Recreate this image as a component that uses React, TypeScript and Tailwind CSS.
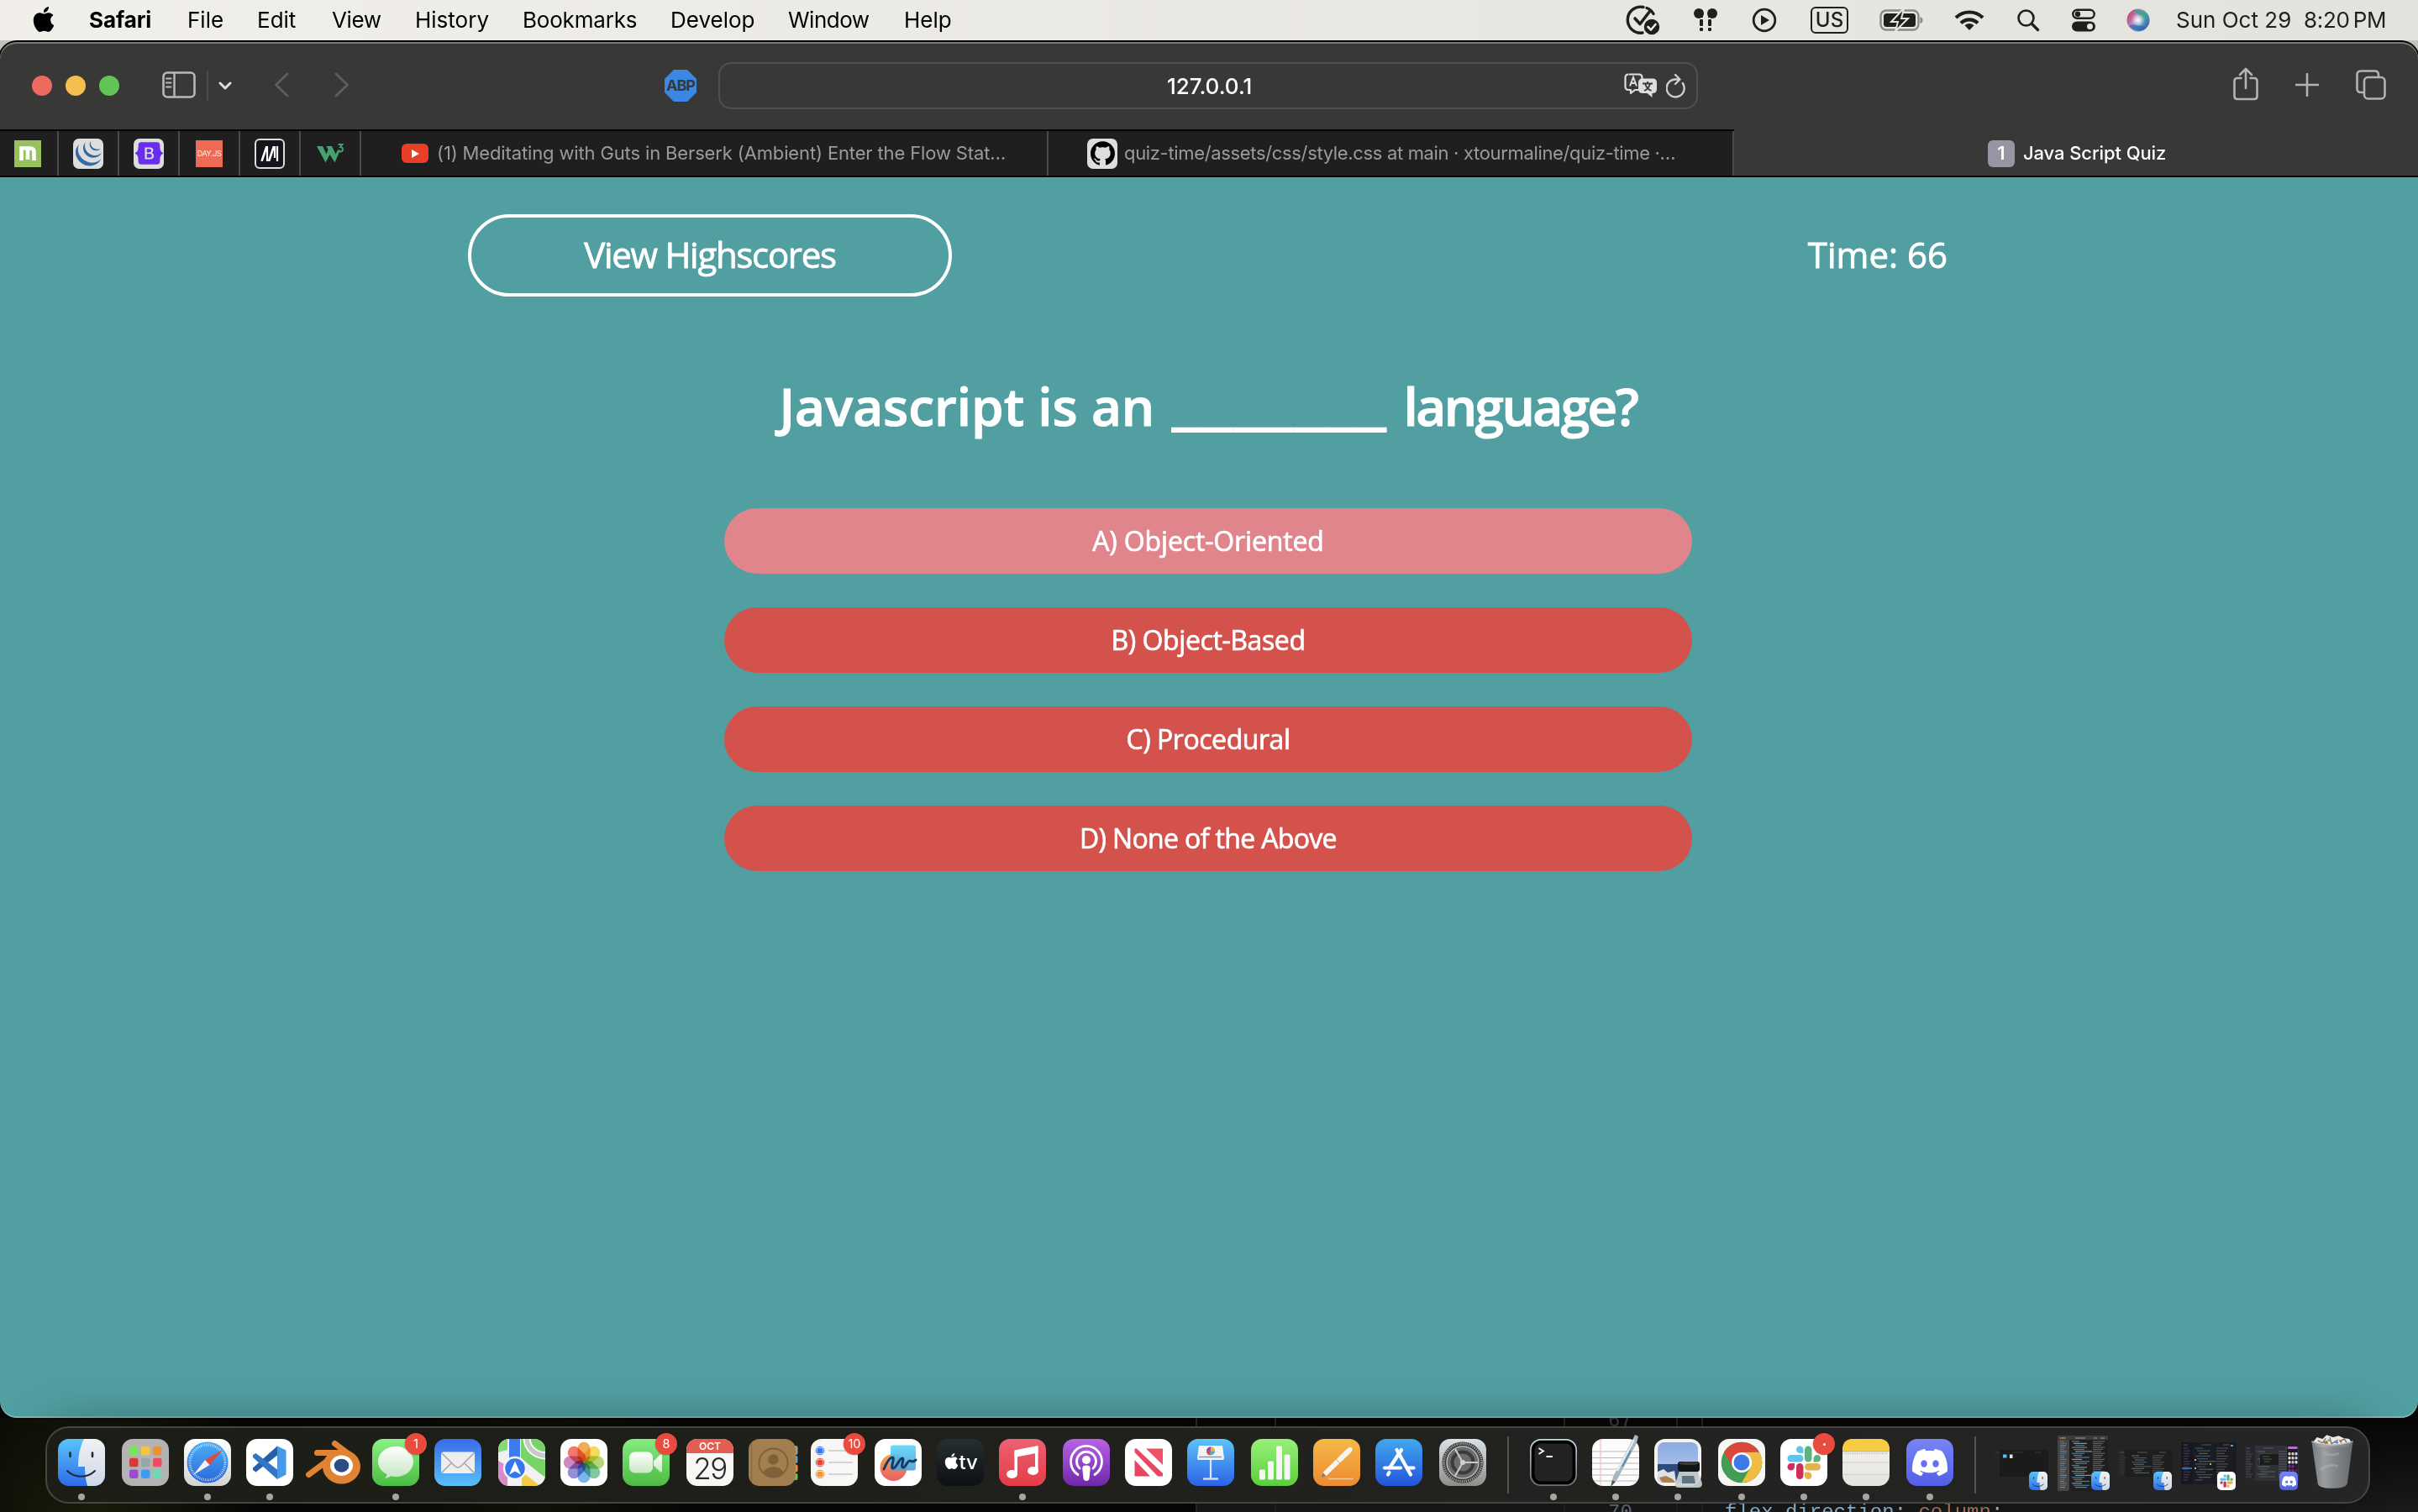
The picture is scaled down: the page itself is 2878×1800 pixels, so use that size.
import type { ReactNode } from "react";
import { SiApple, SiGithub, SiJquery, SiDiscord, SiBootstrap } from "react-icons/si";

/* ---------- Menu bar ---------- */

const MENUS = [
  { label: "Safari", cls: "w-[117px] font-bold tracking-[-0.1px]" },
  { label: "File", cls: "w-[83px]" },
  { label: "Edit", cls: "w-[89px]" },
  { label: "View", cls: "w-[99px] tracking-[-0.4px]" },
  { label: "History", cls: "w-[128px]" },
  { label: "Bookmarks", cls: "w-[176px] tracking-[-0.2px]" },
  { label: "Develop", cls: "w-[140px]" },
  { label: "Window", cls: "w-[138px] tracking-[-0.5px]" },
  { label: "Help", cls: "w-[60px]" },
];

function MenuBar() {
  return (
    <header className="flex h-12 shrink-0 items-center bg-gradient-to-r from-[#f1efe9] to-[#e4e2dc] text-[26px] leading-[47px] text-black">
      <SiApple size={30} className="-mt-[3px] mr-[39px] ml-[37px]" />
      {MENUS.map((m) => (
        <span key={m.label} className={"-mt-px whitespace-nowrap " + m.cls}>{m.label}</span>
      ))}
      <div className="ml-auto flex items-center text-[#1f1f1e]">
        <svg width="42" height="38" viewBox="0 0 42 38" className="mr-[38px]" fill="none" stroke="currentColor" strokeLinecap="round" strokeLinejoin="round">
          <path d="M21 3.5A15.500 15.500 0 1 0 20 34" strokeWidth="3.4" />
          <path d="M25 4.5a15 15 0 0 1 8 7" strokeWidth="3.4" />
          <path d="M11 17l6 6.500L29 8" strokeWidth="3.6" />
          <circle cx="31" cy="27" r="10" fill="currentColor" stroke="#e8e6e0" strokeWidth="1.500" />
          <path d="M26.500 27l3.500 3.500 5.500-6.500" stroke="#e8e6e0" strokeWidth="2.600" />
        </svg>
        <svg width="30" height="28" viewBox="0 0 30 28" className="mr-[40px]" fill="currentColor">
          <ellipse cx="7" cy="6" rx="6" ry="6" /><path d="M7 2h5v9H9z" /><rect x="8" y="13" width="4" height="8" rx="1" /><rect x="8" y="23" width="4" height="4" rx="1" />
          <ellipse cx="23" cy="6" rx="6" ry="6" /><path d="M23 2h-5v9h3z" /><rect x="18" y="13" width="4" height="8" rx="1" /><rect x="18" y="23" width="4" height="4" rx="1" />
        </svg>
        <svg width="30" height="30" viewBox="0 0 30 30" className="mr-[40px]">
          <circle cx="15" cy="15" r="12.800" fill="none" stroke="currentColor" strokeWidth="2.800" /><path d="M11 9l10 6-10 6z" fill="currentColor" />
        </svg>
        <span className="mr-[37px] flex h-[32px] w-[45px] items-center justify-center rounded-[6px] border-[2.500px] border-[#1f1f1e] text-[24px] leading-none font-medium">US</span>
        <svg width="52" height="26" viewBox="0 0 52 26" className="mr-[37px]">
          <rect x="1.500" y="1.500" width="45" height="23" rx="6.500" fill="none" stroke="#8b8a86" strokeWidth="2.400" />
          <rect x="5" y="5" width="38" height="16" rx="3.500" fill="currentColor" />
          <path d="M48.500 9v8c2-.6 3-2 3-4s-1-3.400-3-4z" fill="#8b8a86" />
          <path d="M28 0L14 15h8l-3 11 15-15h-8l3-11z" fill="currentColor" stroke="#e7e5df" strokeWidth="2" />
        </svg>
        <svg width="36" height="26" viewBox="0 0 36 26" className="mr-[38px]" fill="none" stroke="currentColor" strokeWidth="4.200">
          <path d="M2 10a23 23 0 0 1 32 0" /><path d="M8 16.500a14 14 0 0 1 20 0" /><path d="M18 25l5.500-5.800a8 8 0 0 0-11 0z" fill="currentColor" stroke="none" />
        </svg>
        <svg width="28" height="28" viewBox="0 0 28 28" className="mr-[38px]" fill="none" stroke="currentColor" strokeLinecap="round">
          <circle cx="11.500" cy="11.500" r="9" strokeWidth="2.600" /><path d="M18.500 18.500l7 7" strokeWidth="3.400" />
        </svg>
        <svg width="28" height="28" viewBox="0 0 28 28" className="mr-[37px]">
          <rect x="1.300" y="1.800" width="25.400" height="10" rx="5" fill="none" stroke="currentColor" strokeWidth="2.400" /><circle cx="7" cy="6.800" r="3.200" fill="currentColor" />
          <rect x="0" y="15.500" width="28" height="12" rx="6" fill="currentColor" /><circle cx="21.500" cy="21.500" r="3.500" fill="#e6e4de" />
        </svg>
        <svg width="28" height="28" viewBox="0 0 28 28" className="mr-[31px]">
          <defs>
            <linearGradient id="siri" x1="0" y1="0.200" x2="1" y2="0.800"><stop offset="0" stopColor="#c43a6a" /><stop offset=".4" stopColor="#b98fc0" /><stop offset=".6" stopColor="#5aa7b5" /><stop offset="1" stopColor="#3558b8" /></linearGradient>
            <radialGradient id="siriGlow"><stop offset="0" stopColor="#fff" /><stop offset="1" stopColor="#fff" stopOpacity="0" /></radialGradient>
          </defs>
          <circle cx="14" cy="14" r="13.500" fill="url(#siri)" /><path d="M8 3c7-4 17 1 18 8-4 2-8 0-18-8z" fill="#3f9f86" opacity=".8" /><path d="M3 20c3 7 14 9 20 3-6-3-14-5-20-3z" fill="#2f55b5" opacity=".6" /><circle cx="14" cy="14" r="8" fill="url(#siriGlow)" />
        </svg>
        <span className="-mt-px w-[152px] whitespace-nowrap">Sun Oct 29</span>
        <span className="-mt-px mr-[38px] w-[98px] whitespace-nowrap tracking-[-0.3px] [word-spacing:-3px]">8:20 PM</span>
      </div>
    </header>
  );
}

/* ---------- Browser toolbar ---------- */

function Toolbar() {
  return (
    <div className="grid h-[104px] shrink-0 grid-cols-[791px_1fr_858px] items-center bg-[#383836]">
      <div className="flex items-center">
        <div className="ml-[38px] flex gap-4">
          <i className="size-6 rounded-full bg-[#ed6a5f]" /><i className="size-6 rounded-full bg-[#f5bf4f]" /><i className="size-6 rounded-full bg-[#61c455]" />
        </div>
        <svg width="40" height="32" viewBox="0 0 40 32" className="-mt-[2px] ml-[51px]" fill="none" stroke="#b9b9b8">
          <rect x="1.500" y="1.500" width="37" height="29" rx="4.500" strokeWidth="2.600" /><path d="M14.500 2v28" strokeWidth="2.400" /><path d="M5 8.500h5.500M5 13.500h5.500M5 18.500h5.500" strokeWidth="2" strokeLinecap="round" />
        </svg>
        <div className="ml-[13px] h-[36px] w-[2px] bg-[#4c4c4a]" />
        <svg width="16" height="11" viewBox="0 0 16 11" className="ml-[12px]" fill="none" stroke="#dededd" strokeWidth="3" strokeLinecap="round" strokeLinejoin="round"><path d="M2 2l6 6 6-6" /></svg>
        <svg width="18" height="30" viewBox="0 0 18 30" className="-mt-[2px] ml-[50px]" fill="none" stroke="#5e5e5c" strokeWidth="2.800" strokeLinecap="round" strokeLinejoin="round"><path d="M16 2L2.500 15 16 28" /></svg>
        <svg width="18" height="30" viewBox="0 0 18 30" className="-mt-[2px] ml-[54px]" fill="none" stroke="#5e5e5c" strokeWidth="2.800" strokeLinecap="round" strokeLinejoin="round"><path d="M2 2l13.500 13L2 28" /></svg>
      </div>
      <div className="flex items-center">
        <div className="flex size-[38px] shrink-0 items-center justify-center bg-[#3b87e3] text-[18px] leading-none font-bold tracking-[-1px] text-[#383836] [clip-path:polygon(29%_0,71%_0,100%_29%,100%_71%,71%_100%,29%_100%,0_71%,0_29%)]">ABP</div>
        <div className="ml-[26px] flex h-[56px] w-[1166px] shrink-0 items-center rounded-[15px] border-2 border-[#50504e] text-[26px] font-medium text-white">
          <span className="ml-[532px] w-[544px] whitespace-nowrap">127.0.0.1</span>
          <svg width="40" height="30" viewBox="0 0 40 30" fill="none">
            <path d="M6 1.500h11.500q4 0 4 4v3.500M18 20h-5l-5 4v-4H5.500q-4 0-4-4V5.500q0-4 4-4" stroke="#dededd" strokeWidth="2.200" strokeLinejoin="round" />
            <path d="M7 15.500L11 5l4 10.500M8.300 12h5.400" stroke="#dededd" strokeWidth="2" />
            <path d="M22 6.500h12q5 0 5 5v7.500q0 5-5 5h-.5v5l-6-5H22q-5 0-5-5v-7.500q0-5 5-5z" fill="#dededd" />
            <path d="M22 12.500h12M28 10v2.500M24 21c4-1.500 6-4 7-8.500M32.500 21c-4-1.500-6-4-7.500-8.500" stroke="#383836" strokeWidth="1.800" />
          </svg>
          <svg width="24" height="30" viewBox="0 0 24 30" className="ml-[10px]" fill="none" stroke="#cfcfce" strokeWidth="2.400" strokeLinecap="round" strokeLinejoin="round"><path d="M19.800 12A10.500 10.500 0 1 1 12 7.500h4M11 2l5.500 5.500L11 13" /></svg>
        </div>
      </div>
      <div className="flex items-center text-[#b3b3b2]">
        <svg width="32" height="40" viewBox="0 0 32 40" className="-mt-[5px] ml-[636px]" fill="none" stroke="currentColor" strokeWidth="2.600" strokeLinecap="round" strokeLinejoin="round"><path d="M10.500 13H6q-3.500 0-3.500 3.500v18Q2.500 38 6 38h20q3.500 0 3.500-3.500v-18Q29.500 13 26 13h-4.500M16 25V2.500M9 9l7-7 7 7" /></svg>
        <svg width="28" height="28" viewBox="0 0 28 28" className="-mt-[2px] ml-[43px]" stroke="currentColor" strokeWidth="2.600" strokeLinecap="round"><path d="M14 1v26M1 14h26" /></svg>
        <svg width="36" height="36" viewBox="0 0 36 36" className="-mt-[2px] ml-[44px]" fill="none" stroke="currentColor" strokeWidth="2.600" strokeLinejoin="round"><rect x="10" y="9" width="24.500" height="25.500" rx="4.500" /><path d="M9.500 27H6q-4.500 0-4.500-4.500V6Q1.500 1.500 6 1.500h16.500Q27 1.500 27 6v2.500" /></svg>
      </div>
    </div>
  );
}

/* ---------- Tab strip ---------- */

const PINNED: { id: string; w: string; icon: ReactNode }[] = [
  { id: "modulo", w: "w-[70px] pr-[2px]", icon: <span className="flex size-8 items-center justify-center bg-[#97c15c]"><svg width="20" height="18" viewBox="0 0 20 18" fill="none" stroke="#fff" strokeWidth="4.600"><path d="M2.500 17V2.500h10.500q4.500 0 4.500 4.500v10M10 3v13" /></svg></span> },
  { id: "jquery", w: "w-[72px]", icon: <span className="flex size-9 items-center justify-center rounded-[7px] bg-[#dddddc]"><SiJquery size={31} color="#3469a4" /></span> },
  { id: "bootstrap", w: "w-[72px]", icon: <span className="relative flex size-9 items-center justify-center rounded-[7px] bg-[#dddddc]"><SiBootstrap size={33} color="#6a2df0" /></span> },
  { id: "dayjs", w: "w-[72px]", icon: <span className="flex size-8 items-center justify-center bg-[#ed6a55] text-[9px] tracking-[-0.4px] text-[#fff0ec]">DAY.JS</span> },
  { id: "mdn", w: "w-[72px]", icon: <span className="flex size-9 items-center justify-center rounded-[6px] border-2 border-[#dddddc] bg-[#15141a]"><svg width="22" height="18" viewBox="0 0 22 18" fill="none" stroke="#fff" strokeWidth="2.600"><path d="M1.500 18L7.500 0M10 18L16 0" /><path d="M8 0v18M17 0v14" strokeWidth="2.200" /><path d="M20 0v18" strokeWidth="2.200" /></svg></span> },
  { id: "w3", w: "w-[72px]", icon: <svg width="32" height="24" viewBox="0 0 32 24" className="mt-[-2px]" fill="none"><path d="M0 4h7l4.500 9.500L13.500 8 11.500 4H18l4.500 9.500 2.500-5h3l-6.500 15L15.500 14 10.500 23.500z" fill="#46a171" /><path d="M25.500 2h5l-2.500 3c2.500 0 3 1.500 3 2.800 0 1.700-1.300 2.700-3 2.700-1.200 0-2.200-.5-2.700-1.300" stroke="#46a171" strokeWidth="1.800" /></svg> },
];

function TabStrip() {
  return (
    <div className="flex h-[57px] shrink-0 border-b-2 border-[#060606] bg-[#383836] text-[22px] text-[#9b9b9b]">
      <div className="flex w-[2064px] border-t-2 border-[#060606] bg-[#1f1f1f]">
        {PINNED.map((p) => (
          <div key={p.id} className={"flex items-center justify-center border-r-2 border-[#4a4a4a] " + p.w}>{p.icon}</div>
        ))}
        <div className="flex w-[818px] items-center border-r-2 border-[#4a4a4a] pl-[48px]">
          <span className="flex h-[23px] w-8 items-center justify-center rounded-[6px] bg-[#e93f26]"><svg width="9" height="10" viewBox="0 0 9 10" fill="#fff"><path d="M0 0l9 5-9 5z" /></svg></span>
          <span className="ml-[10px] whitespace-nowrap tracking-[-0.14px]">(1) Meditating with Guts in Berserk (Ambient) Enter the Flow Stat…</span>
        </div>
        <div className="flex flex-1 items-center border-r-2 border-[#4a4a4a] pl-[46px]">
          <span className="flex size-9 items-center justify-center rounded-[7px] bg-[#dddddc]"><SiGithub size={29} color="#000" /></span>
          <span className="ml-[8px] whitespace-nowrap tracking-[-0.34px]">quiz-time/assets/css/style.css at main · xtourmaline/quiz-time ·…</span>
        </div>
      </div>
      <div className="flex flex-1 items-center pt-[2px] pl-[302px] font-medium text-white">
        <span className="flex size-8 items-center justify-center rounded-[6px] bg-[#9695a3] text-[22px] font-semibold">1</span>
        <span className="ml-[10px] whitespace-nowrap tracking-[-0.1px]">Java Script Quiz</span>
      </div>
    </div>
  );
}

/* ---------- Quiz page ---------- */

const OPTIONS = [
  { text: "A) Object-Oriented", cls: "bg-[#df858b]", t: "tracking-[-0.15px]" },
  { text: "B) Object-Based", cls: "bg-[#d3524c]", t: "tracking-[-0.4px]" },
  { text: "C) Procedural", cls: "bg-[#d3524c]", t: "tracking-[-0.45px]" },
  { text: "D) None of the Above", cls: "bg-[#d3524c]", t: "tracking-[-0.65px]" },
];

function Quiz() {
  return (
    <main className="flex flex-1 flex-col items-center bg-[#519fa1] pr-[2px] font-['Open_Sans',sans-serif] text-white">
      <div className="mt-[44px] flex w-[1762px] items-center justify-between [-webkit-text-stroke:0.8px_white]">
        <button className="h-[98px] w-[576px] rounded-full border-4 border-white text-[42px] leading-none tracking-[-1.3px]"><span className="relative -top-[1px]">View Highscores</span></button>
        <span className="relative -top-[1px] pr-[1px] text-[42px] leading-none">Time: 66</span>
      </div>
      <h1 className="mt-[90px] flex h-[80px] items-baseline text-[62px] leading-[80px] font-semibold [-webkit-text-stroke:1px_white]">
        <span className="mr-[20px]">Javascript is an</span>
        <span className="relative -top-[6px] mr-[20px] text-[89px] leading-[0] font-bold [-webkit-text-stroke:0px]">_______</span>
        <span className="tracking-[-2.5px]">language?</span>
      </h1>
      <div className="mt-[82px] flex w-[1152px] flex-col gap-10">
        {OPTIONS.map((o) => (
          <button key={o.text} className={"h-[78px] rounded-full text-[32px] leading-none [-webkit-text-stroke:0.7px_white] " + o.cls}><span className={o.t}>{o.text}</span></button>
        ))}
      </div>
    </main>
  );
}

/* ---------- Dock icons ---------- */

function Tile({ from, to, children, fill }: { from?: string; to?: string; fill?: string; children?: ReactNode }) {
  const id = "g" + (from ?? "").slice(1) + (to ?? "").slice(1);
  return (
    <svg width="56" height="56" viewBox="0 0 56 56" className="overflow-visible">
      {from && <defs><linearGradient id={id} x1="0" y1="0" x2="0" y2="1"><stop offset="0" stopColor={from} /><stop offset="1" stopColor={to} /></linearGradient></defs>}
      <rect width="56" height="56" rx="13" fill={fill ?? `url(#${id})`} />
      {children}
    </svg>
  );
}

function FinderArt({ size = 56 }: { size?: number }) {
  return (
    <svg width={size} height={size} viewBox="0 0 56 56">
      <defs>
        <linearGradient id="fnd" x1="0" y1="0" x2="0" y2="1"><stop offset="0" stopColor="#59c4fa" /><stop offset="1" stopColor="#2f6bea" /></linearGradient>
        <linearGradient id="fndR" x1="0" y1="0" x2="0" y2="1"><stop offset="0" stopColor="#f1f1f3" /><stop offset="1" stopColor="#cfd8e6" /></linearGradient>
        <clipPath id="fndC"><rect width="56" height="56" rx="13" /></clipPath>
      </defs>
      <g clipPath="url(#fndC)">
        <rect width="56" height="56" fill="url(#fnd)" />
        <path d="M31 0h25v56H35c-2-7-3-14-3-23h-8C24 21 26 10 31 0z" fill="url(#fndR)" />
        <path d="M14.500 16.500v4.500M41 16.500v4.500" stroke="#1c2a44" strokeWidth="2.600" strokeLinecap="round" />
        <path d="M11 38c9 9 24 9 33 0" fill="none" stroke="#1c2a44" strokeWidth="2" strokeLinecap="round" />
      </g>
    </svg>
  );
}

const LP = ["#7ee35c", "#f3c547", "#e99238", "#d63a30", "#9aa4ab", "#ee4a63", "#9a4bd0", "#3c9cf4", "#6fd8b4"];
const Launchpad = () => (
  <Tile fill="#b4b3b3">{LP.map((c, i) => <rect key={c} x={9 + (i % 3) * 14} y={9 + Math.floor(i / 3) * 13.7} width="10.500" height="10.500" rx="2.500" fill={c} />)}</Tile>
);
const Safari = () => (
  <Tile from="#ffffff" to="#d4d4d4">
    <defs><linearGradient id="saf" x1="0" y1="0" x2="0" y2="1"><stop offset="0" stopColor="#4ab0f3" /><stop offset="1" stopColor="#2b66db" /></linearGradient></defs>
    <circle cx="28" cy="28" r="24.500" fill="url(#saf)" />
    <circle cx="28" cy="28" r="21" fill="none" stroke="#d6e8fb" strokeWidth="3" strokeDasharray="0.800 1.400" />
    <path d="M46 13L25 25l5.500 6z" fill="#e8473c" /><path d="M11 43l14-18 5.500 6z" fill="#f2f2f2" />
  </Tile>
);
const Code = () => (
  <Tile fill="#ffffff">
    <path d="M37 8.500v11L11.500 39.500 8 37v-2.500z" fill="#2560a8" /><path d="M37 8.500l10.500 5v29L37 48z" fill="#4599e6" /><path d="M11.500 17L37 36.500V48L8 22v-3z" fill="#2f77c4" />
  </Tile>
);
const Blender = () => (
  <svg width="56" height="56" viewBox="0 0 56 56" className="overflow-visible">
    <g stroke="#e08433" strokeWidth="7" strokeLinecap="round"><path d="M29.500 5.500L50 21" /><path d="M8.500 16.500H38" /><path d="M-1.500 42.500L26 22" /></g>
    <ellipse cx="37.500" cy="33" rx="22.500" ry="20.500" fill="#e08433" /><ellipse cx="37.500" cy="31.700" rx="13.500" ry="12.200" fill="#fff" /><ellipse cx="37.500" cy="31.700" rx="8.800" ry="8" fill="#2d4e85" />
  </svg>
);
const Messages = () => (
  <Tile from="#8af184" to="#4cbd44">
    <defs><linearGradient id="msg" x1="0" y1="0" x2="0" y2="1"><stop offset="0" stopColor="#fff" /><stop offset="1" stopColor="#c5e5c2" /></linearGradient></defs>
    <path d="M28 9c12 0 21 8 21 18s-9 18-21 18c-2 0-4-.2-6-.7-2 1.500-4 2.300-7 2.700 1.500-1.500 2.300-3 2.500-5C11 39 7 33.500 7 27 7 17 16 9 28 9z" fill="url(#msg)" />
  </Tile>
);
const Mail = () => (
  <Tile from="#3a6bea" to="#58bff8">
    <rect x="8" y="15.500" width="40" height="25.500" rx="3" fill="#eeeeee" /><path d="M9 17l15 15q4 4 8 0l15-15M9 40l12-12M47 40L35 28" fill="none" stroke="#a8a8a8" strokeWidth="1.600" />
  </Tile>
);
const Maps = () => (
  <Tile fill="#f1f1f4">
    <defs><clipPath id="mapC"><rect width="56" height="56" rx="13" /></clipPath></defs>
    <g clipPath="url(#mapC)">
      <path d="M27 0h29v46L27 24z" fill="#78d468" /><path d="M0 0h11v13L0 16z" fill="#86d97a" /><path d="M0 26l11 6v24H0z" fill="#d98ac8" /><path d="M28 56V39l22 17z" fill="#f3cb45" />
      <rect x="13" width="13" height="30" fill="#3c7cf0" /><path d="M34-2c0 13 10 22 24 22" fill="none" stroke="#fff" strokeWidth="9" /><path d="M34-2c0 13 10 22 24 22" fill="none" stroke="#c9c9cd" strokeWidth="5.500" />
      <path d="M26 22l32 26v10L26 34z" fill="#f1f1f4" />
      <circle cx="20" cy="35" r="13" fill="#3277ec" stroke="#f4f4f6" strokeWidth="2.500" /><path d="M20 26.500l7 16-7-4-7 4z" fill="#fff" />
    </g>
  </Tile>
);
const PH = ["#f29a38", "#f4d63c", "#a9d05a", "#67c08b", "#5fa8e8", "#7e78d0", "#c470b8", "#ee5d4f"];
const Photos = () => (
  <Tile fill="#fdfdfd"><g className="mix-blend-multiply">{PH.map((c, i) => <rect key={c} x="20.500" y="3.800" width="15" height="24" rx="7.500" fill={c} opacity=".82" className="mix-blend-multiply" transform={`rotate(${i * 45} 28 28)`} />)}</g></Tile>
);
const FaceTime = () => (
  <Tile from="#86ec80" to="#4cbb44">
    <defs><linearGradient id="ft" x1="0" y1="0" x2="0" y2="1"><stop offset="0" stopColor="#fff" /><stop offset="1" stopColor="#c9e8c5" /></linearGradient></defs>
    <rect x="8" y="15.500" width="28" height="25" rx="6.500" fill="url(#ft)" /><path d="M37 26.500l7.500-7.500q2.500-1.500 2.500 1v18q0 2.500-2.500 1L37 31.500z" fill="url(#ft)" />
  </Tile>
);
const Calendar = () => (
  <div className="h-14 w-14 overflow-hidden rounded-[13px] bg-[#f8f7f6] text-center text-[#2b2b2b]">
    <div className="h-[17px] bg-[#e25e52] text-[12px] leading-[18px] font-semibold text-white">OCT</div>
    <div className="text-[35px] leading-[36px] font-light tracking-[-1.500px]">29</div>
  </div>
);
const Contacts = () => (
  <svg width="60" height="56" viewBox="0 0 60 56">
    <rect x="44" y="8" width="14.500" height="11" rx="2.500" fill="#9e9d9a" /><rect x="44" y="20" width="14.500" height="9" rx="2" fill="#4aa6e6" /><rect x="44" y="30.500" width="14.500" height="9" rx="2" fill="#ef9038" /><rect x="44" y="41" width="14.500" height="8" rx="2" fill="#57c85a" />
    <rect width="56" height="56" rx="13" fill="#a37f4f" /><path d="M3.500 5v46" stroke="#8c6b40" strokeWidth="1.500" />
    <g fill="none" stroke="#7f6139" strokeWidth="1.800"><circle cx="29.500" cy="28.500" r="17" /></g><circle cx="29.500" cy="24.500" r="6.200" fill="#7f6139" /><path d="M17.500 40c4-9 20-9 24 0-7 7-17 7-24 0z" fill="#7f6139" />
  </svg>
);
const Reminders = () => (
  <Tile fill="#f8f7f5">{["#3478f0", "#e0443a", "#ec9532"].map((c, i) => <g key={c}><circle cx="11" cy={14 + i * 14} r="3.600" fill={c} /><circle cx="11" cy={14 + i * 14} r="4.800" fill="none" stroke={c} /><path d={`M21 ${14 + i * 14}h29`} stroke="#c9c8c6" strokeWidth="1.500" /></g>)}</Tile>
);
const Freeform = () => (
  <Tile fill="#ffffff">
    <defs><linearGradient id="ffo" x1="0" y1="0" x2="0" y2="1"><stop offset="0" stopColor="#f3a64a" /><stop offset="1" stopColor="#ea5d66" /></linearGradient><linearGradient id="ffb" x1="0" y1="0" x2="0" y2="1"><stop offset="0" stopColor="#5ed5fa" /><stop offset="1" stopColor="#4a9fd8" /></linearGradient></defs>
    <circle cx="22.500" cy="34" r="16" fill="url(#ffo)" /><rect x="19" y="7.500" width="30" height="30" rx="3" fill="url(#ffb)" opacity=".9" />
    <path d="M11 36c3-7 7-14 10-14 4 0-3 13 1 13s7-12 11-12c3 0-3 11 1 11 3 0 5-8 8-8 2 0 2 3 7-1" fill="none" stroke="#123a66" strokeWidth="3" strokeLinecap="round" />
  </Tile>
);
const AppleTv = () => (
  <div className="flex size-14 items-center justify-center rounded-[13px] bg-gradient-to-b from-[#25302f] to-[#0d1013] text-[24px] leading-none font-medium tracking-[-0.3px] text-white">
    <SiApple size={19} className="-mt-[3px]" /><span className="-mt-[1px]">tv</span>
  </div>
);
const Music = () => (
  <Tile from="#ec6273" to="#e53b48">
    <path d="M18.500 13.500L46.500 8v8.500l-28 5.500z" fill="#fff" /><path d="M20.200 15v27M44.800 10v28" stroke="#fff" strokeWidth="3.500" /><ellipse cx="15.500" cy="42" rx="6.500" ry="5" fill="#fff" /><ellipse cx="40.500" cy="38" rx="6.500" ry="5" fill="#fff" />
  </Tile>
);
const Podcasts = () => (
  <Tile from="#b863e6" to="#6f28ab">
    <g fill="none" stroke="#fff" strokeWidth="2.800" strokeLinecap="round"><path d="M18 42.500a18.500 18.500 0 1 1 20 0" /><path d="M20 35a11.500 11.500 0 1 1 16 0" /></g>
    <circle cx="28" cy="25" r="5" fill="#fff" /><path d="M28 31.500q5 0 4.700 4L31.500 47q-.5 3-3.500 3t-3.500-3L23.300 35.500q-.3-4 4.700-4z" fill="#fff" />
  </Tile>
);
const News = () => (
  <Tile fill="#ffffff">
    <path d="M25 11.500h20V31z" fill="#ef5168" /><path d="M11.500 25v19.500H30z" fill="#e94560" />
    <path d="M14 11.500h-2.500V16L39 44.500h6V41z" fill="#ea4862" />
  </Tile>
);
const Keynote = () => (
  <Tile from="#5cc3f9" to="#2c62e6">
    <path d="M14 8h28l2 15q0 2-2 2H14q-2 0-2-2z" fill="#f4f4f6" /><path d="M14 21.500h27" stroke="#8e99a8" strokeWidth="1.500" /><circle cx="28" cy="14.500" r="5" fill="#48b4c8" /><path d="M28 9.500a5 5 0 0 0-5 5h5z" fill="#a44a9a" /><path d="M28 9.500a5 5 0 0 1 5 5h-5z" fill="#f2b23e" /><path d="M23 14.500a5 5 0 0 0 4 5l1-5z" fill="#dc4a54" />
    <path d="M28 25v22" stroke="#dfe7f3" strokeWidth="2.200" /><path d="M19 47.500h18" stroke="#d5d9e2" strokeWidth="2.500" />
  </Tile>
);
const Numbers = () => (
  <Tile from="#98f07a" to="#5bce3e"><g fill="#f6f6f6"><rect x="10" y="36.500" width="7" height="12" rx="1.500" /><rect x="20" y="26.500" width="7" height="22" rx="1.500" /><rect x="30" y="8.500" width="7" height="40" rx="1.500" /><rect x="39.500" y="18.500" width="7" height="30" rx="1.500" /></g></Tile>
);
const Pages = () => (
  <Tile from="#f5b847" to="#ee8a32"><path d="M9 47l2.500-7L40 12q4-3.500 6-1.500t-1.500 6L15.500 44z" fill="#f7f5f2" /><path d="M9 47l6.500-3-4-4z" fill="#9a7a58" /><path d="M27 24l5 5" stroke="#b9a48c" strokeWidth="1" /><path d="M18 47.500h30" stroke="#f7c795" strokeWidth="1.500" /></Tile>
);
const AppStore = () => (
  <Tile from="#41a8f0" to="#2355d8"><g fill="none" stroke="#fff" strokeWidth="4.200" strokeLinecap="round"><path d="M31 13L17 34.500" /><path d="M25.500 13L42 42.500" /><path d="M11 34.500h19M39 34.500h6.500" /><path d="M15 42.500l1.500-2.500" /></g></Tile>
);
const Settings = () => (
  <Tile from="#d9e2e8" to="#8f8d8b">
    <circle cx="28" cy="28" r="24.500" fill="#353535" /><circle cx="28" cy="28" r="22.500" fill="none" stroke="#9a9a9a" strokeWidth="3" strokeDasharray="1.400 1.100" /><circle cx="28" cy="28" r="19" fill="#6c6c6c" stroke="#b9b9b9" strokeWidth="1.500" />
    <circle cx="28" cy="28" r="12.500" fill="none" stroke="#3b3b3b" strokeWidth="4" /><g stroke="#c9c9c9" strokeWidth="2.200"><path d="M28 28h18.500M28 28L19 12M28 28l-9 16" /></g><circle cx="28" cy="28" r="3" fill="#d0d0d0" />
  </Tile>
);
const Terminal = () => (
  <Tile from="#c3dbe4" to="#6e6e6e"><rect x="1.700" y="1.700" width="52.600" height="52.600" rx="11.500" fill="#000" /><rect x="5.500" y="5.500" width="45" height="45" rx="8" fill="#232323" /><path d="M10.500 11l5.500 3.500-5.500 3.500M19.500 21H27" fill="none" stroke="#fff" strokeWidth="1.800" /></Tile>
);
const TextEdit = () => (
  <Tile fill="#fcfcfc">
    <path d="M0 15h56M0 22.500h56M0 29h56M0 36h56M0 43h56M2 50h52" stroke="#b9b9b9" strokeWidth="1.200" /><path d="M10 0v56" stroke="#e9b9b3" />
    <path d="M51-5l4 2-2 8-23 43-8 9 3-12 23-44z" fill="#a9b6c0" /><path d="M50 1L30 38" stroke="#e8f1f7" strokeWidth="2" /><path d="M46 14L36 33" stroke="#5f8fae" strokeWidth="2" /><path d="M22 57l2-8 4 2z" fill="#55595c" />
  </Tile>
);
const Preview = () => (
  <Tile fill="#f4f3f2">
    <defs><linearGradient id="pv" x1="0" y1="0" x2="0" y2="1"><stop offset="0" stopColor="#8cabe4" /><stop offset="1" stopColor="#b7cdf0" /></linearGradient></defs>
    <rect x="4" y="4" width="48" height="48" rx="8" fill="url(#pv)" /><path d="M4 30h48v14q0 8-8 8H12q-8 0-8-8z" fill="#2d4a78" /><path d="M4 39l7-3 5 4 8-2 2 14H12q-8 0-8-8z" fill="#dfe3e8" /><path d="M6 46l8-2 8 4 3 4H12q-4 0-6-6z" fill="#a8814f" />
    <path d="M30 38h22l5 15q0 5-5 5H29q-5 0-4-5z" fill="#c9d0d3" opacity=".92" /><path d="M33 44h14l2 9H33z" fill="#5f7386" /><rect x="28" y="27" width="26" height="12" rx="3" fill="#151515" /><ellipse cx="41" cy="29" rx="12" ry="2" fill="#3b3b3b" />
  </Tile>
);
const Chrome = () => (
  <Tile fill="#f6f6f5">
    <g transform="translate(28 28)"><circle r="24.300" fill="#429c51" /><path d="M-21-12.200A24.300 24.300 0 0 1 21-12.200L0-12 -10.400 6z" fill="#d9483b" /><path d="M21-12.200A24.300 24.300 0 0 1 0 24.300L10.400 6 0-12z" fill="#f1bc42" /><circle r="12" fill="#fff" /><circle r="9.500" fill="#3d7ae8" /></g>
  </Tile>
);
function SlackArt({ size = 56 }: { size?: number }) {
  return (
    <svg width={size} height={size} viewBox="0 0 56 56">
      <rect width="56" height="56" rx="13" fill="#fff" />
      <g fill="#5fc3ec"><rect x="8.500" y="19" width="19" height="8.500" rx="4.250" /><path d="M19 12.700a4.250 4.250 0 0 1 8.500 0V17h-4.250A4.250 4.250 0 0 1 19 12.700z" /></g>
      <g fill="#5bb381"><rect x="29" y="8.500" width="8.500" height="19" rx="4.250" /><path d="M43.800 19a4.250 4.250 0 0 1 0 8.500H39.500v-4.250A4.250 4.250 0 0 1 43.800 19z" /></g>
      <g fill="#e3b34b"><rect x="29" y="29" width="19" height="8.500" rx="4.250" /><path d="M37.500 43.800a4.250 4.250 0 0 1-8.500 0V39.500h4.250a4.250 4.250 0 0 1 4.250 4.300z" /></g>
      <g fill="#cf2f5b"><rect x="19" y="29" width="8.500" height="19" rx="4.250" /><path d="M12.700 37.500a4.250 4.250 0 0 1 0-8.500H17v4.250a4.250 4.250 0 0 1-4.300 4.250z" /></g>
    </svg>
  );
}
const Notes = () => (
  <Tile from="#f4f3f0" to="#e4e3de"><path d="M0 15V13Q0 0 13 0h30q13 0 13 13v2z" fill="#f6cc45" /><path d="M0 15h56" stroke="#b9b6ac" strokeWidth="1.200" /><path d="M2 17.500h52" stroke="#b5b2a8" strokeWidth="1.600" strokeDasharray="1 1.500" /><path d="M0 28h56M0 42.500h56" stroke="#cfcdc8" strokeWidth="1.200" /></Tile>
);
const Discord = ({ small }: { small?: boolean }) => (
  <div className={"flex items-center justify-center bg-gradient-to-b from-[#7984f5] to-[#525ee8] text-white " + (small ? "size-[22px] rounded-[5px]" : "size-14 rounded-[13px]")}><SiDiscord size={small ? 17 : 42} /></div>
);
const Trash = () => (
  <svg width="52" height="66" viewBox="0 0 54 68">
    <defs><linearGradient id="tr" x1="0" y1="0" x2="1" y2="0"><stop offset="0" stopColor="#7d8184" /><stop offset=".3" stopColor="#a3a7aa" /><stop offset=".55" stopColor="#8b8f92" /><stop offset="1" stopColor="#6b6f72" /></linearGradient></defs>
    <path d="M3 10l5-6 7 2 5-5 8 3 7-2 6 3 7 1 3 5-5 5H8z" fill="#e8e8e6" /><path d="M9 8l6 3 4-6M24 4l2 8 8-5M36 9l6-3 3 5" fill="none" stroke="#7b7a78" strokeWidth="1.500" /><path d="M16 9l5-1 1 4h-5zM35 7l4 1-1 4z" fill="#b0713e" /><path d="M29 10l5-1v3z" fill="#3f6ea8" /><path d="M21 6l3 1-1 3z" fill="#4e9d62" />
    <path d="M1.500 9q25 9 51 0L45.500 61q-1 6-18.500 6T9 61z" fill="url(#tr)" opacity=".93" /><path d="M1.500 9q25 9 51 0" fill="none" stroke="#b7babc" strokeWidth="1.500" /><path d="M15 22q8 6 20 2M12 44q12-8 22-4" stroke="#bcc0c2" strokeWidth="3" opacity=".35" fill="none" />
  </svg>
);

/* ---------- Dock ---------- */

function Badge({ children }: { children?: ReactNode }) {
  return <span className="absolute -top-[7px] -right-[9px] flex size-[26px] items-center justify-center rounded-full bg-[#e94b3f] text-[14.500px] leading-none text-white shadow-[0_0_2px_rgba(0,0,0,0.4)]">{children}</span>;
}

type DockItem = { id: string; art: ReactNode; ml?: string; run?: boolean; badge?: ReactNode };
const W = "ml-5";
const APPS: DockItem[] = [
  { id: "finder", art: <FinderArt />, ml: "ml-[13px]", run: true },
  { id: "launchpad", art: <Launchpad />, ml: W },
  { id: "safari", art: <Safari />, run: true },
  { id: "code", art: <Code />, run: true },
  { id: "blender", art: <Blender />, ml: W },
  { id: "messages", art: <Messages />, run: true, badge: "1" },
  { id: "mail", art: <Mail /> },
  { id: "maps", art: <Maps />, ml: W },
  { id: "photos", art: <Photos /> },
  { id: "facetime", art: <FaceTime />, badge: "8" },
  { id: "calendar", art: <Calendar />, ml: W },
  { id: "contacts", art: <Contacts /> },
  { id: "reminders", art: <Reminders />, badge: "10" },
  { id: "freeform", art: <Freeform />, ml: W },
  { id: "tv", art: <AppleTv /> },
  { id: "music", art: <Music />, run: true },
  { id: "podcasts", art: <Podcasts />, ml: W },
  { id: "news", art: <News /> },
  { id: "keynote", art: <Keynote /> },
  { id: "numbers", art: <Numbers />, ml: W },
  { id: "pages", art: <Pages /> },
  { id: "appstore", art: <AppStore /> },
  { id: "settings", art: <Settings />, ml: W },
];
const APPS2: DockItem[] = [
  { id: "terminal", art: <Terminal />, ml: "ml-[25px]", run: true },
  { id: "textedit", art: <TextEdit />, run: true },
  { id: "preview", art: <Preview />, run: true },
  { id: "chrome", art: <Chrome />, ml: W, run: true },
  { id: "slack", art: <SlackArt />, run: true, badge: <i className="size-[3px] rounded-full bg-white" /> },
  { id: "notes", art: <Notes />, run: true },
  { id: "discord", art: <Discord />, ml: W, run: true },
];

function DockApp({ app }: { app: DockItem }) {
  return (
    <div className={"flex w-14 shrink-0 flex-col " + (app.ml ?? "ml-[18px]")}>
      <div className="relative mt-[13px] h-14 w-14">{app.art}{app.badge && <Badge>{app.badge}</Badge>}</div>
      {app.run && <i className="mt-[9px] size-2 self-center rounded-full bg-[#a5a5a2]" />}
    </div>
  );
}

const range = (n: number) => Array.from({ length: n }, (_, i) => i);

type MiniProps = { h: number; bg: string; side: string; sideW?: number; rows: number; colors: string[]; sideColors?: string[]; ml: string; badge: ReactNode; x0?: number; dim?: number; children?: ReactNode };

/** Minimised window: rows of tiny coloured dashes on a dark panel. */
function Mini({ h, bg, side, sideW = 14, rows, colors, sideColors = ["#77777a"], ml, badge, x0 = 0, dim = 1, children }: MiniProps) {
  return (
    <div className={"relative mt-[9px] flex h-[66px] w-[66px] shrink-0 items-center " + ml}>
      <svg width="66" height={h} viewBox={`0 0 66 ${h}`}>
        <rect x={x0} width={66 - 2 * x0} height={h} rx="1.500" fill={bg} /><rect x={x0} width={sideW} height={h} rx="1.500" fill={side} />
        <g opacity={dim}>
          <path d={`M${x0 + 3} 3h5M${x0 + 24} 3h12M50 3h8`} stroke="#77777a" />
          {range(rows).map((i) => {
            const y = 7 + (i * (h - 9)) / Math.max(rows, 1);
            return <g key={i} strokeWidth="1.200"><path d={`M${x0 + 3} ${y}h${5 + ((i * 3) % 4)}`} stroke={sideColors[i % sideColors.length]} /><path d={`M${x0 + 17 + (i % 3) * 2} ${y}h${9 + ((i * 7) % 12)}`} stroke={colors[i % colors.length]} /><path d={`M${x0 + 42} ${y}h${14 - (i % 3) * 2}`} stroke="#6c6c6e" /></g>;
          })}
        </g>
        {children}
      </svg>
      <div className="absolute right-[1px] bottom-[1px]">{badge}</div>
    </div>
  );
}

const STICKERS = ["#a3e3a0", "#f0c8a0", "#c9d8e8", "#d8e8c0", "#e8c8d8", "#b8d8e8", "#e8e0b0", "#c8b8e0", "#e0e0e0", "#5a3aa0", "#7a2a60", "#2a1a3a", "#6a3ab0", "#8a2a3a", "#3a2a6a"];

function Dock() {
  return (
    <nav className="relative mt-[10px] ml-[54px] flex h-[92px] w-[2767px] rounded-[28px] border-2 border-[#454543] bg-gradient-to-r from-[#1c1d16] via-[#20201c] via-45% to-[#252525] shadow-[0_0_60px_rgba(0,0,0,0.35)]">
      {APPS.map((a) => <DockApp key={a.id} app={a} />)}
      <div className="mt-[10px] ml-[25px] h-[68px] w-[2px] bg-[#525250]" />
      {APPS2.map((a) => <DockApp key={a.id} app={a} />)}
      <div className="mt-[10px] ml-[25px] h-[68px] w-[2px] bg-[#525250]" />
      <Mini h={32} bg="#1b1b1b" side="#252525" sideW={8} rows={0} colors={["#777"]} ml="ml-[20px]" dim={0.3} badge={<FinderArt size={22} />}>
        <rect x="12" y="5.500" width="4.500" height="4" fill="#5fb8e8" /><rect x="20" y="5.500" width="3.500" height="4.500" fill="#e0e0e0" />
      </Mini>
      <Mini h={66} bg="#1f1f1f" side="#454545" rows={24} colors={["#6f8796", "#a5a5a5", "#4a90b8", "#8a8a8a"]} sideColors={["#4d82ad", "#6f6f70", "#8b8b8c"]} ml="ml-[8px]" x0={3} dim={0.85} badge={<FinderArt size={22} />}>
        <rect x="3" width="60" height="5" fill="#3c3c3c" /><circle cx="6.500" cy="3" r="1" fill="#ed6a5f" /><circle cx="9" cy="3" r="1" fill="#c9a040" /><circle cx="11.500" cy="3" r="1" fill="#61c455" /><path d="M24 3h12M46 3h4M54 3h5" stroke="#9a9a9a" strokeWidth="1.200" />
      </Mini>
      <Mini h={32} bg="#1e1e1e" side="#272727" sideW={9} rows={9} colors={["#8a8a8a", "#4a7d98"]} sideColors={["#3c3c3c"]} ml="ml-[8px]" dim={0.6} badge={<FinderArt size={22} />} />
      <Mini h={50} bg="#1a1c22" side="#191622" rows={13} colors={["#70737a", "#3c7aa8", "#8a8672"]} sideColors={["#56505f"]} ml="ml-[10px]" dim={0.6} badge={<SlackArt size={22} />}>
        <rect x="1" y="30" width="12" height="2" fill="#2f6fae" /><rect x="59" y="3" width="3" height="2" fill="#4aa6e6" /><path d="M16 21h2M16 31h2M34 26h2" stroke="#d0b060" strokeWidth="2" />
      </Mini>
      <Mini h={42} bg="#2f3136" side="#25262b" rows={11} colors={["#75777c", "#55705a", "#75777c"]} sideColors={["#5e6066"]} ml="ml-[8px]" dim={0.6} badge={<Discord small />}>
        <rect x="20" y="10" width="22" height="13" fill="#1c1d1a" /><path d="M23 13h8M24 16h10M25 19h6" stroke="#4d6044" />
        <rect x="52" width="13" height="42" fill="#1f1a2a" /><rect x="53" y="1" width="11.500" height="3" rx="1" fill="#b073c8" />
        {STICKERS.map((c, i) => <rect key={c} x={53.5 + (i % 3) * 4} y={8 + Math.floor(i / 3) * 5} width="3" height="3.500" rx="1" fill={c} />)}
      </Mini>
      <div className="mt-[7px] ml-[14px]"><Trash /></div>
    </nav>
  );
}

export default function App() {
  return (
    <div className="relative flex h-[1800px] w-[2878px] flex-col overflow-hidden bg-[#070806] font-['Inter',sans-serif]">
      <MenuBar />
      <div className="bg-gradient-to-b from-[#c4c2ba] from-[20px] to-transparent to-[24px]">
        <section className="relative mt-[2px] flex h-[1638px] flex-col overflow-hidden rounded-[20px] shadow-[0_0_0_2px_#000] after:pointer-events-none after:absolute after:inset-0 after:rounded-[20px] after:shadow-[inset_0_2px_0_#77797a,inset_0_-2px_0_rgba(255,255,255,0.25)]">
          <Toolbar />
          <TabStrip />
          <Quiz />
        </section>
      </div>
      <div className="relative flex-1 bg-[radial-gradient(circle_at_4%_90%,#1d210c_0,transparent_7%),radial-gradient(circle_at_22%_100%,#12160a_0,transparent_9%)]">
        {/* Code editor window that shows around the dock */}
        <div className="absolute inset-y-0 left-[1423px] flex w-[1455px] overflow-hidden border-l-2 border-[#2a2a2a] bg-gradient-to-b from-[#070707] to-[#1b1b1b] font-['Liberation_Mono',monospace] text-[24px] text-[#6e7681]">
          <div className="w-[94px] border-r-2 border-[#252525]" />
          <div className="w-[344px] border-r-2 border-[#252525]" />
          <div className="relative w-[134px] border-r-2 border-[#252525]"><span className="absolute top-[-8px] left-[51px] leading-[24px] opacity-50">67</span><span className="absolute top-[101px] left-[51px] leading-[24px]">70</span></div>
          <div className="relative w-[30px] border-r-2 border-[#252525]"><span className="absolute top-[101px] left-[56px] leading-[24px] whitespace-pre text-[#9cc7e6]">flex-direction<span className="text-[#c5c5c5]">:</span> <span className="text-[#b98068]">column</span><span className="text-[#c5c5c5]">;</span></span></div>
        </div>
        <Dock />
      </div>
    </div>
  );
}
